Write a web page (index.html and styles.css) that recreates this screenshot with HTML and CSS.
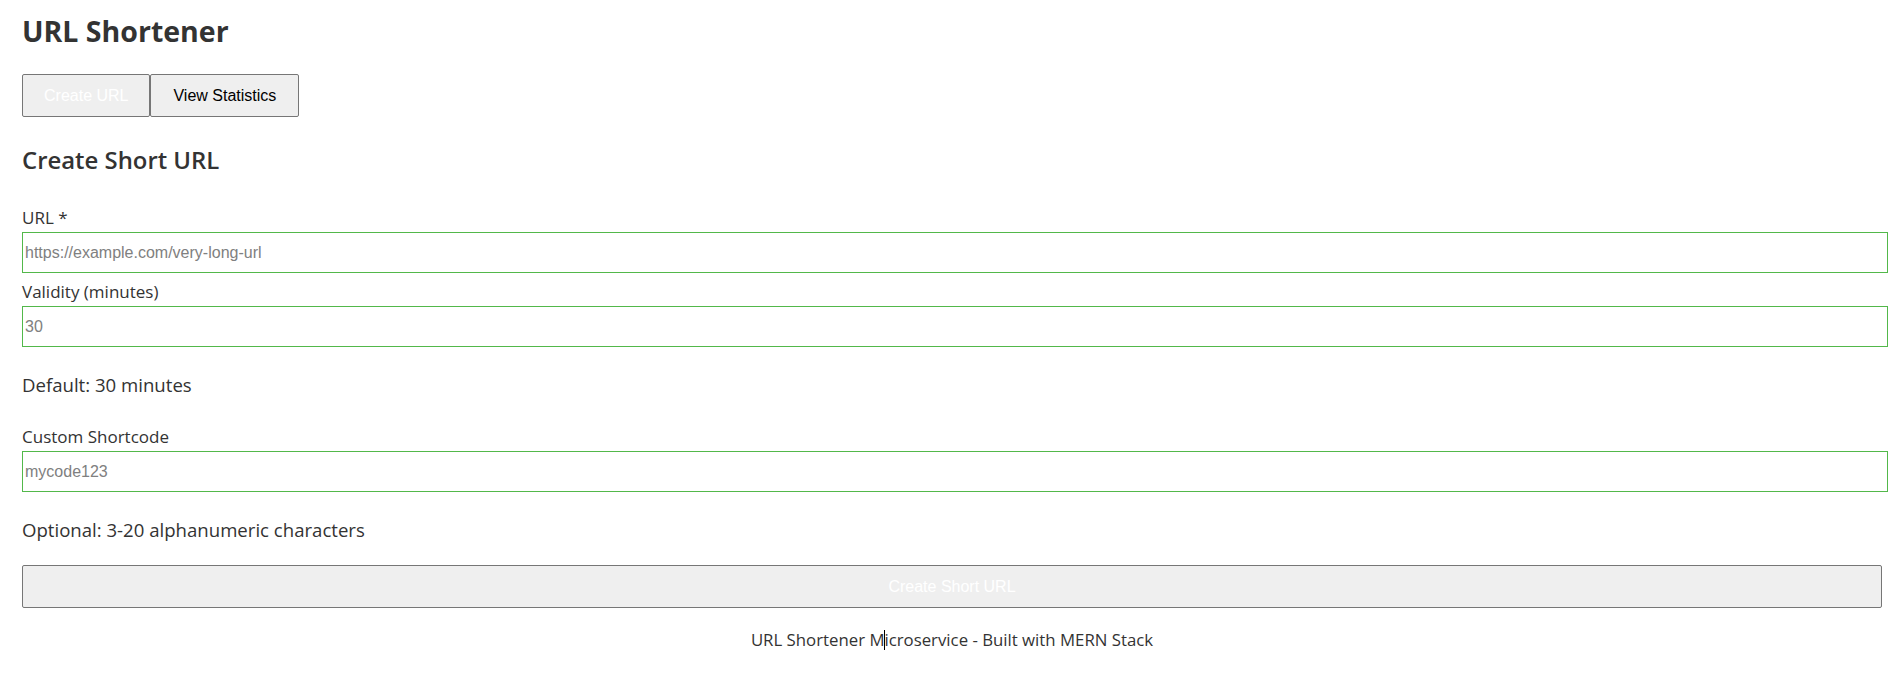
FILE: index.html
```html
<!DOCTYPE html>
<html lang="en">
<head>
<meta charset="utf-8">
<title>URL Shortener</title>
<link rel="stylesheet" href="styles.css">
</head>
<body>
<div class="app">
  <h1 class="title">URL Shortener</h1>
  <nav class="tabs">
    <button class="tab tab-active" type="button">Create URL</button>
    <button class="tab" type="button">View Statistics</button>
  </nav>
  <h2 class="section-title">Create Short URL</h2>
  <form class="form">
    <div class="field">
      <label class="field-label" for="url">URL *</label>
      <input class="field-input" id="url" type="text" placeholder="https://example.com/very-long-url">
    </div>
    <div class="field field-next">
      <label class="field-label" for="validity">Validity (minutes)</label>
      <input class="field-input" id="validity" type="text" placeholder="30">
    </div>
    <p class="hint">Default: 30 minutes</p>
    <div class="field field-after-hint">
      <label class="field-label" for="code">Custom Shortcode</label>
      <input class="field-input" id="code" type="text" placeholder="mycode123">
    </div>
    <p class="hint">Optional: 3-20 alphanumeric characters</p>
    <button class="submit" type="button">Create Short URL</button>
  </form>
  <footer class="footer">URL Shortener <span class="caret">M</span>icroservice - Built with MERN Stack</footer>
</div>
</body>
</html>
```
FILE: styles.css
```css
html, body {
  margin: 0;
  padding: 0;
  background: #ffffff;
}

body {
  font-family: "Open Sans", "Noto Sans", sans-serif;
  color: #333333;
}

.app {
  padding: 0 10px 0 22px;
}

.title {
  margin: 14px 0 0;
  font-size: 28.5px;
  line-height: 34px;
  font-weight: 700;
  color: #333333;
}

.tabs {
  display: flex;
  margin-top: 26px;
}

.tab {
  box-sizing: border-box;
  height: 43px;
  padding: 0 21px;
  font-family: "Liberation Sans", Arial, sans-serif;
  font-size: 16px;
  color: #000000;
  background: #efefef;
  border: 1px solid #767676;
  border-radius: 2px;
  margin: 0;
}

.tab + .tab {
  padding: 0 22px;
}

.tab-active {
  color: #ffffff;
}

.section-title {
  margin: 28px 0 0;
  font-size: 23.9px;
  line-height: 30px;
  font-weight: 600;
  color: #333333;
}

.form {
  margin-top: 32px;
}

.field-label {
  display: block;
  font-size: 17px;
  line-height: 22px;
  margin-bottom: 3px;
  color: #333333;
}

.field-input {
  display: block;
  width: 100%;
  height: 37px;
  padding: 1px 2px;
  margin: 0;
  border: 1px solid #52b84a;
  border-radius: 0;
  font-family: "Liberation Sans", Arial, sans-serif;
  font-size: 16px;
  color: #333333;
  outline: none;
}

.field-input::placeholder {
  color: #808080;
}

.field-next {
  margin-top: 8px;
}

.field-after-hint {
  margin-top: 28px;
}

.hint {
  margin: 25px 0 0;
  font-size: 18.6px;
  line-height: 26px;
  color: #333333;
}

.submit {
  display: block;
  box-sizing: border-box;
  width: 100%;
  height: 43px;
  margin-top: 22px;
  padding: 0 20px;
  font-family: "Liberation Sans", Arial, sans-serif;
  font-size: 16px;
  color: #ffffff;
  background: #efefef;
  border: 1px solid #767676;
  border-radius: 2px;
}

.footer {
  margin-top: 21px;
  text-align: center;
  font-size: 16.8px;
  line-height: 22px;
  color: #333333;
}

.caret {
  position: relative;
}

.caret::after {
  content: "";
  position: absolute;
  right: -1px;
  top: 2px;
  width: 1px;
  height: 20px;
  background: #000000;
}
```
